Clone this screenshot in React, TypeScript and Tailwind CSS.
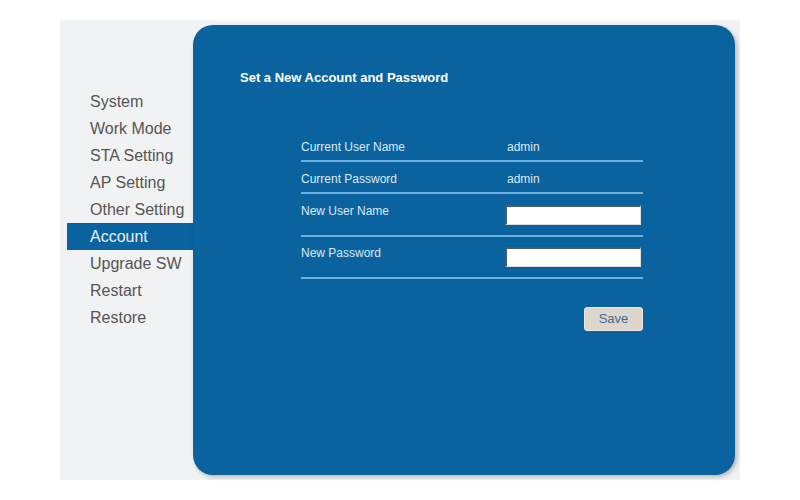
import React from "react";

const menu = ["System", "Work Mode", "STA Setting", "AP Setting", "Other Setting", "Account", "Upgrade SW", "Restart", "Restore"];

export default function App() {
  return (
    <div className="w-[800px] h-[500px] bg-white pt-[20px] pl-[60px]" style={{ fontFamily: '"Liberation Sans", Arial, sans-serif' }}>
      <div className="w-[680px] h-[460px] bg-[#f1f2f3] flex">
        <div className="w-[133px] pt-[68px] pl-[7px]">
          {menu.map((m) => (
            <div
              key={m}
              className={
                m === "Account"
                  ? "h-[27px] pl-[23px] flex items-center text-[16px] bg-[#0a639e] text-[#e8f0f7]"
                  : "h-[27px] pl-[23px] flex items-center text-[16px] text-[#555555]"
              }
            >
              {m}
            </div>
          ))}
        </div>
        <div className="mt-[5px] w-[542px] h-[450px] bg-[#0a639e] rounded-[20px] shadow-[2px_2px_4px_rgba(0,0,0,0.25)] pl-[47px] pt-[45px]">
          <div className="text-[13px] font-bold text-white leading-[15px]">Set a New Account and Password</div>
          <div className="ml-[61px] mt-[44px] w-[342px] text-[12px] leading-[14px] text-[#dce8f3]">
            <div className="h-[33px] border-b-2 border-[#6cb0df] flex pt-[11px]">
              <div className="w-[206px]">Current User Name</div>
              <div>admin</div>
            </div>
            <div className="h-[32px] border-b-2 border-[#6cb0df] flex pt-[10px]">
              <div className="w-[206px]">Current Password</div>
              <div>admin</div>
            </div>
            <div className="h-[43px] border-b-2 border-[#6cb0df] flex">
              <div className="w-[204px] pt-[10px]">New User Name</div>
              <div className="mt-[11px] w-[136px] h-[20px] bg-white border-t-2 border-l-2 border-[#4a5a66] border-r border-b border-r-[#dcdcdc] border-b-[#dcdcdc]" />
            </div>
            <div className="h-[42px] border-b-2 border-[#6cb0df] flex">
              <div className="w-[204px] pt-[9px]">New Password</div>
              <div className="mt-[10px] w-[136px] h-[20px] bg-white border-t-2 border-l-2 border-[#4a5a66] border-r border-b border-r-[#dcdcdc] border-b-[#dcdcdc]" />
            </div>
            <div className="flex justify-end mt-[28px]">
              <button className="w-[59px] h-[24px] bg-[#ddd6cd] border border-[#ece7e0] rounded-[3px] text-[13px] text-[#44698f]">Save</button>
            </div>
          </div>
        </div>
      </div>
    </div>
  );
}
